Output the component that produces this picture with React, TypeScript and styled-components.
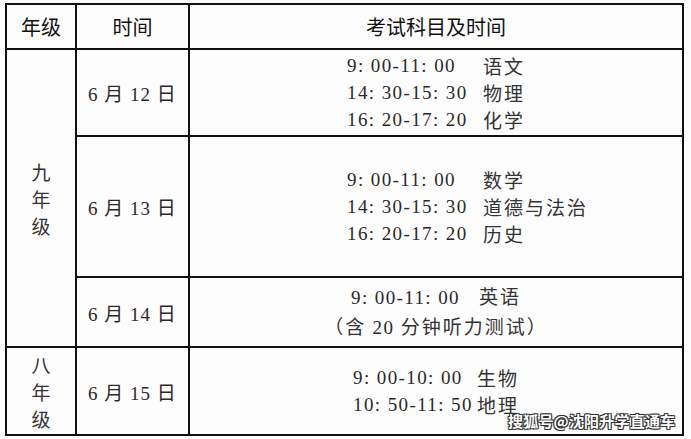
import React from "react";
import styled, { createGlobalStyle } from "styled-components";

const Global = createGlobalStyle`
  html, body { margin: 0; padding: 0; background: #fdfdfd; }
  body { width: 691px; height: 439px; overflow: hidden; }
`;

const Page = styled.div`
  position: relative;
  width: 691px;
  height: 439px;
  padding: 3px 0 0 5px;
  box-sizing: border-box;
  background: #fdfdfd;
`;

const Table = styled.table`
  border-collapse: collapse;
  table-layout: fixed;
  width: 677px;
  font-family: "Liberation Serif", "Noto Sans CJK SC", serif;
  font-size: 19px;
  color: #2a2a2a;
`;

const Col = styled.col<{ $w: number }>`
  width: ${(p) => p.$w}px;
`;

const Row = styled.tr<{ $h: number }>`
  height: ${(p) => p.$h}px;
`;

const HeadCell = styled.th`
  border: 2px solid #111;
  padding: 0;
  font-family: "Noto Sans CJK SC", sans-serif;
  font-weight: 400;
  font-size: 20px;
  color: #111;
  text-align: center;
  vertical-align: middle;
  line-height: 1;
`;

const Cell = styled.td<{ $align?: "left" | "center"; $pad?: number }>`
  border: 2px solid #111;
  padding: 0 0 0 ${(p) => p.$pad ?? 0}px;
  text-align: ${(p) => p.$align ?? "center"};
  vertical-align: middle;
`;

const GradeText = styled.div`
  font-family: "Noto Sans CJK SC", serif;
  font-size: 19px;
  color: #333;
  line-height: 27px;
  width: 1em;
  margin: 0 auto;
  text-align: center;
`;

const DateText = styled.span`
  letter-spacing: 1px;
  white-space: pre;
  color: #2a2a2a;
`;

const Schedule = styled.div<{ $timeW: number }>`
  display: grid;
  grid-template-columns: ${(p) => p.$timeW}px auto;
  line-height: 27px;
  white-space: pre;
  text-align: left;
`;

const Time = styled.span`
  letter-spacing: 1.4px;
`;

const Subject = styled.span`
  font-family: "Noto Sans CJK SC", serif;
  font-size: 19px;
  letter-spacing: 2px;
  color: #333;
`;

const Line = styled.div`
  line-height: 28px;
  white-space: pre;
`;

const Watermark = styled.div`
  position: absolute;
  left: 508px;
  top: 411px;
  font-family: "Noto Sans CJK SC", sans-serif;
  font-weight: 700;
  font-size: 15px;
  line-height: 20px;
  color: #fff;
  letter-spacing: 0.2px;
  white-space: nowrap;
  text-shadow: -1px -1px 0 #333, 1px -1px 0 #333, -1px 1px 0 #333, 1px 1px 0 #333, 0 0 2px #000;
`;

type Item = [string, string];

const day1: Item[] = [
  ["9: 00-11: 00", "语文"],
  ["14: 30-15: 30", "物理"],
  ["16: 20-17: 20", "化学"],
];
const day2: Item[] = [
  ["9: 00-11: 00", "数学"],
  ["14: 30-15: 30", "道德与法治"],
  ["16: 20-17: 20", "历史"],
];
const day4: Item[] = [
  ["9: 00-10: 00", "生物"],
  ["10: 50-11: 50", "地理"],
];

const List = ({ items, timeW }: { items: Item[]; timeW: number }) => (
  <Schedule $timeW={timeW}>
    {items.map(([t, s]) => (
      <React.Fragment key={t + s}>
        <Time>{t}</Time>
        <Subject>{s}</Subject>
      </React.Fragment>
    ))}
  </Schedule>
);

const Grade = ({ text }: { text: string }) => (
  <GradeText>
    {text.split("").map((c, i) => (
      <div key={i}>{c}</div>
    ))}
  </GradeText>
);

export default function App() {
  return (
    <Page>
      <Global />
      <Table>
        <colgroup>
          <Col $w={70} />
          <Col $w={113} />
          <Col $w={494} />
        </colgroup>
        <tbody>
          <Row $h={45}>
            <HeadCell>年级</HeadCell>
            <HeadCell>时间</HeadCell>
            <HeadCell>考试科目及时间</HeadCell>
          </Row>
          <Row $h={87}>
            <Cell rowSpan={3}>
              <Grade text="九年级" />
            </Cell>
            <Cell>
              <DateText>6 月 12 日</DateText>
            </Cell>
            <Cell $align="left" $pad={157}>
              <List items={day1} timeW={136} />
            </Cell>
          </Row>
          <Row $h={141}>
            <Cell>
              <DateText>6 月 13 日</DateText>
            </Cell>
            <Cell $align="left" $pad={157}>
              <List items={day2} timeW={136} />
            </Cell>
          </Row>
          <Row $h={70}>
            <Cell>
              <DateText>6 月 14 日</DateText>
            </Cell>
            <Cell>
              <Line>
                <Time>9: 00-11: 00</Time>
                {"    "}
                <Subject>英语</Subject>
              </Line>
              <Line>
                <Subject>（含 </Subject>
                <Time>20</Time>
                <Subject> 分钟听力测试）</Subject>
              </Line>
            </Cell>
          </Row>
          <Row $h={88}>
            <Cell>
              <Grade text="八年级" />
            </Cell>
            <Cell>
              <DateText>6 月 15 日</DateText>
            </Cell>
            <Cell $align="left" $pad={163}>
              <List items={day4} timeW={124} />
            </Cell>
          </Row>
        </tbody>
      </Table>
      <Watermark>搜狐号@沈阳升学直通车</Watermark>
    </Page>
  );
}
